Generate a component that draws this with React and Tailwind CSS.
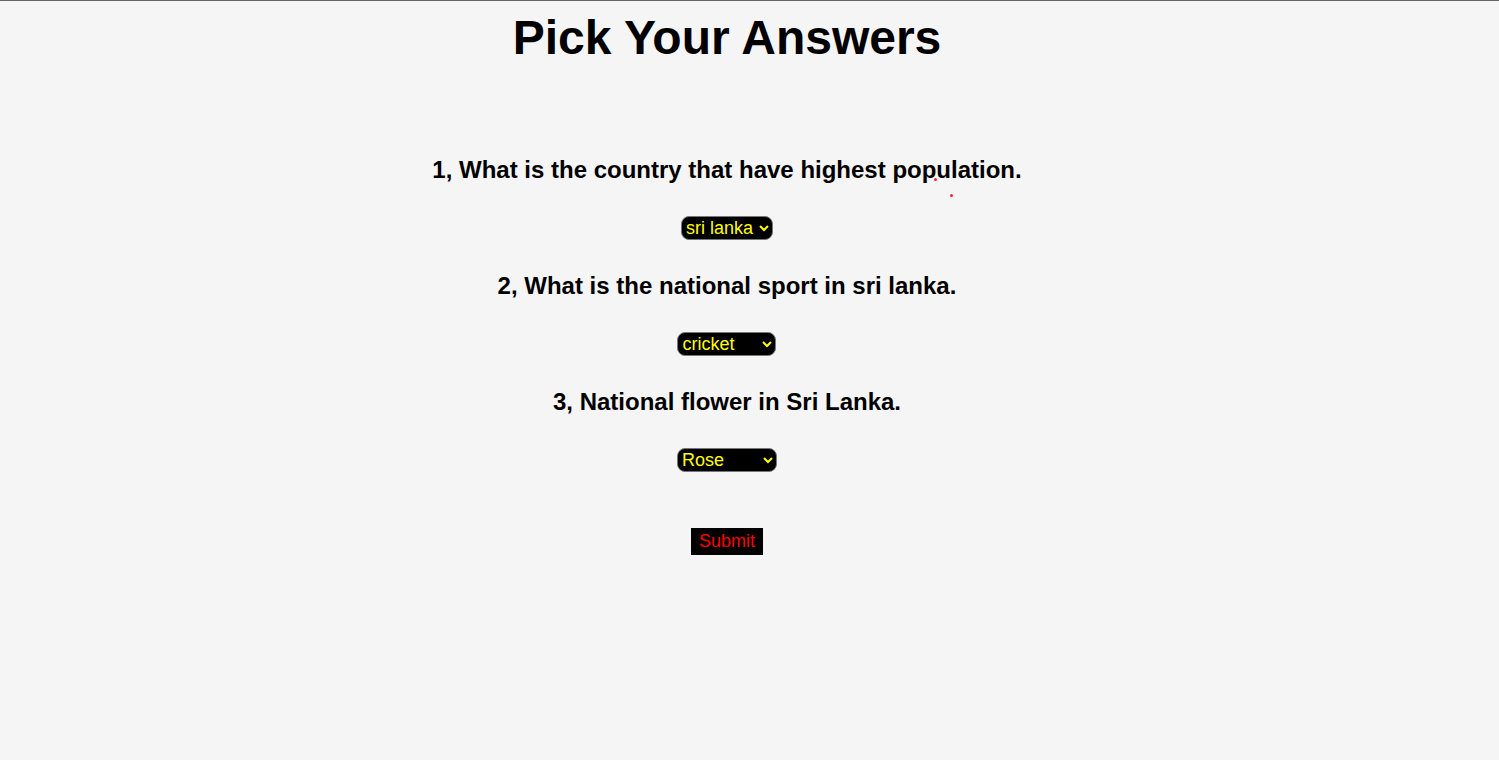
import React from "react";

const questions = [
  { q: "1, What is the country that have highest population.", options: ["sri lanka", "india", "china"], w: "w-[92px]" },
  { q: "2, What is the national sport in sri lanka.", options: ["cricket", "volleyball", "rugby"], w: "w-[99px]" },
  { q: "3, National flower in Sri Lanka.", options: ["Rose", "Nil Manel", "Lotus"], w: "w-[100px]" },
];

export default function App() {
  return (
    <div
      className="relative min-h-[760px] bg-[#f5f5f5] border-t border-[#666666] text-black pr-[45px]"
      style={{ fontFamily: '"Liberation Sans", Arial, sans-serif' }}
    >
      <h1 className="text-center text-[48px] font-bold leading-[55px] pt-[9px]">Pick Your Answers</h1>

      <div className="flex flex-col items-center mt-[91px]">
        {questions.map((item, i) => (
          <div key={i} className="flex flex-col items-center">
            <h3 className="text-[24px] font-bold leading-[28px]">{item.q}</h3>
            <select
              defaultValue={item.options[0]}
              className={`${item.w} mt-[32px] mb-[32px] h-[24px] bg-black text-[#ffff00] text-[18px] leading-[20px] border border-[#777777] rounded-lg px-0`}
            >
              {item.options.map((o) => (
                <option key={o}>{o}</option>
              ))}
            </select>
          </div>
        ))}
        <button className="mt-[24px] w-[72px] h-[27px] bg-black text-[#ff0000] text-[18px]">Submit</button>
      </div>

      <span className="absolute left-[934px] top-[177px] w-[3px] h-[3px] rounded-full bg-[#ff2020]" />
      <span className="absolute left-[950px] top-[193px] w-[3px] h-[3px] rounded-full bg-[#ff2020]" />
    </div>
  );
}
